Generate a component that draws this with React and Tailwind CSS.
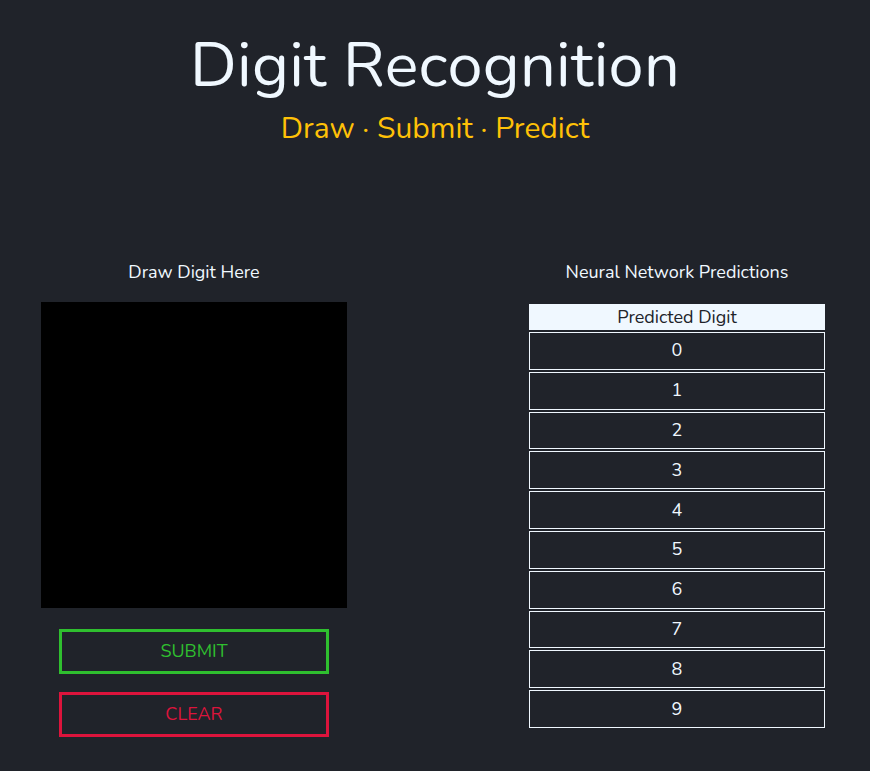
import React from 'react';

const digits = [0, 1, 2, 3, 4, 5, 6, 7, 8, 9];

const App = () => {
    return (
        <div className="min-h-[771px] w-full bg-[#20232a] text-[#f0f8ff] font-['Nunito','Lato',sans-serif]">
            <header className="flex flex-col items-center pt-[29px]">
                <h1 className="text-[63px] leading-[72px] font-normal tracking-[0.3px]">Digit Recognition</h1>
                <p className="text-[30px] leading-[36px] text-[#ffc107] mt-[10px]">Draw · Submit · Predict</p>
            </header>

            <main className="flex items-start pl-[41px] gap-[182px] mt-[114px]">
                <section className="w-[306px] flex flex-col items-center">
                    <h2 className="text-[18px] leading-[22px] h-[22px]">Draw Digit Here</h2>
                    <div className="mt-[19px] w-[306px] h-[306px] bg-black"></div>
                    <button className="mt-[21px] w-[270px] h-[45px] border-[3px] border-[#2fbf2f] text-[#2fbf2f] text-[18px] uppercase">
                        Submit
                    </button>
                    <button className="mt-[18px] w-[270px] h-[45px] border-[3px] border-[#dc143c] text-[#dc143c] text-[18px] uppercase">
                        Clear
                    </button>
                </section>

                <section className="w-[296px] flex flex-col items-center">
                    <h2 className="text-[18px] leading-[22px] h-[22px]">Neural Network Predictions</h2>
                    <div className="mt-[21px] w-full flex flex-col gap-[2px]">
                        <div className="h-[26px] bg-[#f0f8ff] text-[#20232a] text-[18px] flex items-center justify-center">
                            Predicted Digit
                        </div>
                        {digits.map((d) => (
                            <div key={d} className="h-[37.8px] border border-[#f0f8ff] text-[18px] flex items-center justify-center">
                                {d}
                            </div>
                        ))}
                    </div>
                </section>
            </main>
        </div>
    );
};

export default App;
